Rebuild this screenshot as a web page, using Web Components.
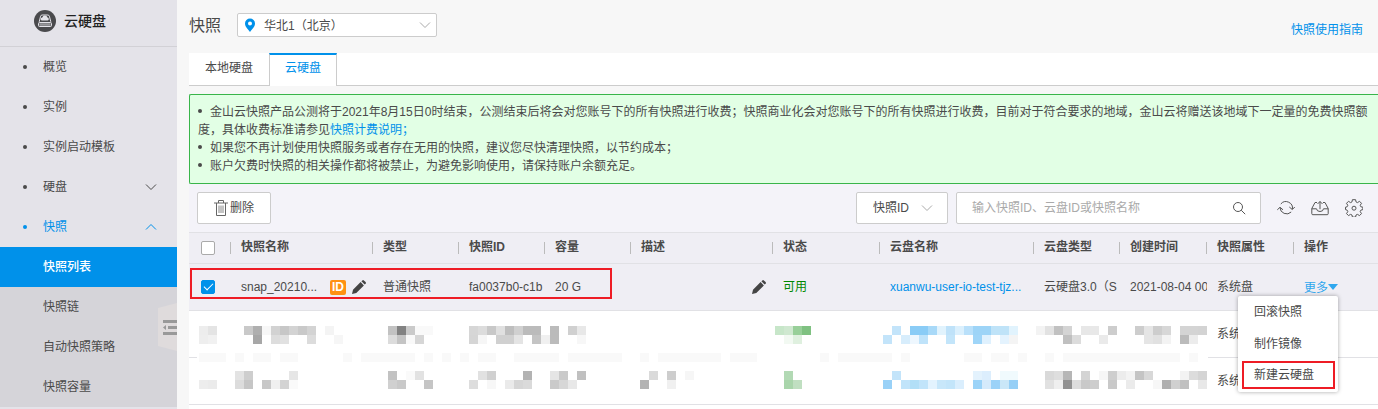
<!DOCTYPE html>
<html lang="zh-CN">
<head>
<meta charset="utf-8">
<title>云硬盘 - 快照</title>
<style>
  html, body {
    margin: 0;
    min-height: 100vh;
  }
  body {
    --blue: #0091ea;
    --mark: #ee1c25;
    --line: #e1e1e5;
    --border: #ccc;
    background: #f7f7f7;
    color: #4a4a4a;
    font: 12px/18px "Liberation Sans", "Noto Sans CJK SC", sans-serif;
  }
</style>
</head>
<body>
<snapshot-page>
  <side-nav slot="nav" heading="云硬盘">
    <nav-item label="概览"></nav-item>
    <nav-item label="实例"></nav-item>
    <nav-item label="实例启动模板"></nav-item>
    <nav-item label="硬盘" arrow="down"></nav-item>
    <nav-item label="快照" arrow="up" open></nav-item>
    <nav-item label="快照列表" sub current></nav-item>
    <nav-item label="快照链" sub></nav-item>
    <nav-item label="自动快照策略" sub></nav-item>
    <nav-item label="快照容量" sub></nav-item>
  </side-nav>
  <page-header heading="快照" region="华北1（北京）">
    <a href="#guide">快照使用指南</a>
  </page-header>
  <tab-bar tabs="本地硬盘,云硬盘" active="1"></tab-bar>
  <notice-box></notice-box>
  <snapshot-toolbar></snapshot-toolbar>
  <snapshot-table></snapshot-table>
</snapshot-page>

<script>
// Create a DOM element with attributes and children
const createElement = (tag, attributes, ...children) => {
  const element = document.createElement(tag);
  for (const key in attributes) {
    element.setAttribute(key, attributes[key]);
  }
  element.append(...children);
  return element;
};

// Base class: every element renders its markup into an open shadow root
class BaseElement extends HTMLElement {
  constructor() {
    super();
    this.attachShadow({ mode: 'open' });
  }

  connectedCallback() {
    this.shadowRoot.innerHTML = `<style>* { box-sizing: border-box; }</style>` + this.template();
    this.rendered();
  }

  template() {
    return '';
  }

  rendered() {}
}

const ICONS = {
  logo: [22, `<circle cx="11" cy="11" r="11" fill="#4a4a4d"/>
    <path d="M5.2 11.8 6.6 6.2Q7 5 8.2 5h5.6Q15 5 15.4 6.2l1.4 5.6" fill="none" stroke="#e4e3e9"/>
    <path d="M8.2 10.6a1.6 1.6 0 0 1 .1-3.2 2.7 2.7 0 0 1 5.2.1 1.6 1.6 0 0 1 .2 3.1z" fill="#e4e3e9"/>
    <rect x="4.5" y="12.5" width="13" height="4" rx="1" fill="#77777a" stroke="#e4e3e9"/>
    <path d="M7 13.5v2M9 13.5v2M11 13.5v2M13 13.5v2M15 13.5v2" stroke="#c8c7cc" stroke-width=".8"/>`],
  pin: [14, `<path fill="#0091ea" fill-rule="evenodd" d="M7 .5a5 5 0 0 0-5 5C2 9 5.200 11.300 7 14c1.800-2.700 5-5 5-8.500a5 5 0 0 0-5-5zm0 3a2 2 0 1 1 0 4 2 2 0 0 1 0-4z"/>`],
  down: [12, `<path d="M1 3.500 6 8.500 11 3.500" fill="none" stroke="currentColor"/>`],
  up: [12, `<path d="M1 8.500 6 3.500 11 8.500" fill="none" stroke="currentColor"/>`],
  trash: [14, `<g fill="none" stroke="#666"><path d="M0 3h14M4.500 3V.5h5V3M2.500 3v12.500h9V3"/><path d="M5 5.500v7.500M7 5.500v7.500M9 5.500v7.500" stroke="#888"/></g>`, 16],
  search: [14, `<g fill="none" stroke="#555"><circle cx="6" cy="6" r="4.500"/><path d="m9.200 9.200 4 4"/></g>`],
  refresh: [18, `<g fill="none" stroke="#555"><path d="M3.800 5A6.600 6.600 0 0 1 15.400 10.300M14.200 13A6.600 6.600 0 0 1 3 8.500"/><path d="M.3 10.800 3 8.300 6 10.800M12.300 8 15.300 10.500 17.800 8"/></g>`],
  upload: [18, `<g fill="none" stroke="#555"><path d="M6 3.500H4L.8 9.500v5.200q0 1 1 1h14.400q1 0 1-1V9.500L14 3.500h-2"/><path d="M.8 9.800h4.700q.3 2.700 3.500 2.700t3.500-2.700h4.700M9 10.200V2.500M6.500 5 9 2.500 11.500 5"/></g>`],
  gear: [18, `<g fill="none" stroke="#555"><path d="M7.400.7h3.200l.4 2.200 1.500.7 2-1.300 2 2-1.300 2 .7 1.500 2 .4v2.400l-2 .5-.7 1.500 1.300 2-2 2-2-1.200-1.500.6-.4 2.100H7.400l-.4-2.100-1.500-.6-2 1.200-2-2 1.300-2-.7-1.500-1.600-.5V8.200l1.600-.4.7-1.500-1.300-2 2-2 2 1.300 1.500-.7z" stroke-linejoin="round"/><circle cx="9" cy="9.200" r="2"/></g>`],
  pencil: [14, `<path fill="#444" d="M0 14l1-4.300 7.600-7.600 3.300 3.300L4.300 13zM9.400 1.300 10.300.4q.8-.7 1.600 0l1.700 1.700q.7.800 0 1.600l-.9.9z"/>`],
  caret: [10, `<path d="M0 1h10L5 7z" fill="currentColor"/>`]
};

class UiIcon extends BaseElement {
  template() {
    const [width, body, height = width] = ICONS[this.getAttribute('name')];
    return `
      <style>
        :host { display: inline-flex; flex: none; }
      </style>
      <svg width="${width}" height="${height}" viewBox="0 0 ${width} ${height}" aria-hidden="true">${body}</svg>`;
  }
}

class SnapshotPage extends BaseElement {
  template() {
    return `
      <style>
        :host { display: flex; min-height: 100vh; gap: 12px; }
        main { flex: 1; min-width: 0; display: flex; flex-direction: column; }
      </style>
      <slot name="nav"></slot>
      <main><slot></slot></main>`;
  }
}

class SideNav extends BaseElement {
  template() {
    return `
      <style>
        :host { display: block; position: relative; flex: none; width: 177px; background: #e4e3e9; }
        header {
          display: flex; align-items: center; gap: 8px; height: 47px;
          padding: 0 0 4px 34px; border-bottom: 1px solid #d2d1d6;
          color: #222; font-size: 14px; font-weight: 500;
        }
        button {
          position: absolute; right: 0; top: 303px; width: 19px; height: 48px;
          padding: 0; border: 0; background: none;
        }
        svg { display: block; }
      </style>
      <header><ui-icon name="logo"></ui-icon><span>${this.getAttribute('heading')}</span></header>
      <nav><slot></slot></nav>
      <button aria-label="收起菜单">
        <svg width="19" height="48" viewBox="0 0 19 48">
          <path d="M0 5 19 0v48L0 43z" fill="#dfdbdc"/>
          <path d="M5 17h14v3H5zM10 23h9v3h-9zM5 29h14v3H5zM5 24.500 8 22v5z" fill="#999"/>
        </svg>
      </button>`;
  }
}

class NavItem extends BaseElement {
  template() {
    const arrow = this.getAttribute('arrow');
    return `
      <style>
        :host { display: block; }
        a {
          display: flex; align-items: center; height: 40px; padding: 0 20px 0 23px;
          color: inherit; text-decoration: none;
        }
        a::before {
          content: ""; width: 4px; height: 4px; margin-right: 16px;
          border-radius: 50%; background: currentColor;
        }
        span { flex: 1; }
        :host([open]) { color: var(--blue); }
        :host([sub]) { background: #d5d4d9; }
        :host([sub]) a::before { visibility: hidden; }
        :host([current]) { background: var(--blue); color: #fff; font-weight: 500; }
      </style>
      <a href="#"><span>${this.getAttribute('label')}</span>${arrow ? `<ui-icon name="${arrow}"></ui-icon>` : ''}</a>`;
  }
}

class PageHeader extends BaseElement {
  template() {
    return `
      <style>
        :host { display: flex; align-items: flex-start; gap: 16px; padding: 13px 15px 14px 0; }
        h1 { margin: 0; font-size: 16px; line-height: 26px; font-weight: 400; }
        .region { display: grid; align-items: center; width: 200px; height: 24px; }
        .region > * { grid-area: 1 / 1; }
        .region ui-icon { pointer-events: none; color: #aaa; }
        .region ui-icon:first-of-type { margin-left: 6px; }
        .region ui-icon:last-of-type { justify-self: end; margin-right: 6px; }
        select {
          appearance: none; width: 100%; height: 24px; padding: 1px 24px 0 26px;
          border: 1px solid var(--border); border-radius: 2px;
          background: #fff; color: inherit; font: inherit;
        }
        .links { margin: 8px 0 0 auto; }
        ::slotted(a) { color: var(--blue); text-decoration: none; }
      </style>
      <h1>${this.getAttribute('heading')}</h1>
      <div class="region">
        <select aria-label="地域"><option>${this.getAttribute('region')}</option></select>
        <ui-icon name="pin"></ui-icon>
        <ui-icon name="down"></ui-icon>
      </div>
      <div class="links"><slot></slot></div>`;
  }
}

class TabBar extends BaseElement {
  template() {
    return `
      <style>
        :host { display: block; background: #fff; }
        div { display: flex; height: 33px; box-shadow: inset 0 -1px var(--border); }
        button {
          padding: 0 16px 3px; border: 0; background: none;
          color: inherit; font: inherit; cursor: pointer;
        }
        button[aria-selected=true] {
          padding: 0 15px 5px; border: solid var(--border); border-width: 0 1px;
          border-top: 2px solid var(--blue); background: #fff; color: var(--blue);
        }
      </style>
      <div role="tablist"></div>`;
  }

  rendered() {
    const list = this.shadowRoot.querySelector('div');
    const active = Number(this.getAttribute('active'));
    this.getAttribute('tabs').split(',').forEach((label, i) => {
      list.append(createElement('button', { role: 'tab', 'aria-selected': i === active }, label));
    });
  }
}

class NoticeBox extends BaseElement {
  template() {
    return `
      <style>
        :host {
          display: block; margin-top: 8px; padding: 8px;
          border: 1px solid #39b54a; border-right: 0; border-radius: 2px 0 0 2px; background: #e2ffe5;
        }
        ul { margin: 0; padding: 0; list-style: none; }
        li::before {
          content: ""; display: inline-block; width: 4px; height: 4px; margin: 0 8px 3px 0;
          border-radius: 50%; background: currentColor;
        }
        a { color: var(--blue); text-decoration: none; }
      </style>
      <ul>
        <li>金山云快照产品公测将于2021年8月15日0时结束，公测结束后将会对您账号下的所有快照进行收费；快照商业化会对您账号下的所有快照进行收费，目前对于符合要求的地域，金山云将赠送该地域下一定量的免费快照额度，具体收费标准请参见<a href="#price">快照计费说明；</a></li>
        <li>如果您不再计划使用快照服务或者存在无用的快照，建议您尽快清理快照，以节约成本；</li>
        <li>账户欠费时快照的相关操作都将被禁止，为避免影响使用，请保持账户余额充足。</li>
      </ul>`;
  }
}

class SnapshotToolbar extends BaseElement {
  template() {
    return `
      <style>
        :host { display: flex; align-items: center; gap: 8px; padding: 8px 15px 8px 8px; background: #f4f3f9; }
        button, select, input { color: inherit; font: inherit; }
        .delete, select, input {
          height: 32px; border: 1px solid var(--border); border-radius: 2px; background: #fff;
        }
        .delete { display: flex; align-items: center; gap: 2px; padding: 0 16px; margin-right: auto; }
        .field { display: grid; align-items: center; }
        .field > * { grid-area: 1 / 1; }
        .field ui-icon { justify-self: end; margin-right: 15px; color: #aaa; pointer-events: none; }
        select { appearance: none; width: 92px; padding: 0 32px 0 16px; }
        input { width: 305px; padding: 0 40px 0 15px; }
        input::placeholder { color: #aaa; }
        .tools { display: flex; gap: 16px; margin-left: 8px; }
        .tools button { display: flex; padding: 0; border: 0; background: none; }
      </style>
      <button class="delete"><ui-icon name="trash"></ui-icon><span>删除</span></button>
      <div class="field">
        <select aria-label="搜索类型"><option>快照ID</option></select>
        <ui-icon name="down"></ui-icon>
      </div>
      <div class="field">
        <input type="text" aria-label="搜索" placeholder="输入快照ID、云盘ID或快照名称">
        <ui-icon name="search"></ui-icon>
      </div>
      <div class="tools">
        <button aria-label="刷新"><ui-icon name="refresh"></ui-icon></button>
        <button aria-label="导出"><ui-icon name="upload"></ui-icon></button>
        <button aria-label="设置"><ui-icon name="gear"></ui-icon></button>
      </div>`;
  }
}

// "更多" button with its open menu, one item can be marked with a frame
class MoreMenu extends BaseElement {
  template() {
    return `
      <style>
        :host { display: inline-block; position: relative; }
        button { font: inherit; color: inherit; border: 0; background: none; text-align: left; cursor: pointer; }
        .more { display: flex; align-items: center; padding: 2px 0 0; line-height: 16px; color: #2fa7ee; white-space: nowrap; }
        .menu {
          position: absolute; z-index: 2; top: 100%; right: 0; width: 100px;
          border-radius: 2px; background: #fff; box-shadow: 0 0 4px rgba(0, 0, 0, .35);
        }
        .menu button { display: block; width: 100%; height: 32px; padding: 0 16px; }
        .menu .marked {
          width: calc(100% - 7px); height: 28px; margin: 1px 3px 3px 4px; padding: 0 10px;
          border: 2px solid var(--mark); white-space: nowrap;
        }
      </style>
      <button class="more" aria-expanded="true">更多<ui-icon name="caret"></ui-icon></button>
      <div class="menu" role="menu">
        <button role="menuitem">回滚快照</button>
        <button role="menuitem">制作镜像</button>
        <button role="menuitem" class="marked">新建云硬盘</button>
      </div>`;
  }
}

// Masked cells on a 9px grid. Each row is [row index, runs];
// a run is "column:shade,shade..." where two digits stand for a grey.
const MASK = [
  [0, `0:ed,e4 5:c9,af,f7,d2,c7,d3,c9,d3 14:f4 21:c2,82,ca,f9,f9
    30:d6,dc,c8,e0,be,d0,bb,bb 39:bb 41:d0,e8 64:c7e6c9,cfe8d0,98cf99,7fc181
    77:c3e4fa 79:8accf6,8accf6,a8d9f8,e1f3fd,bfe2f9,dbf0fd,b9e0fa,9dd4f7,9dd4f7,bfe3f8,bfe3f8,e1f3fd
    93:f3,e2,c1,d4 98:e7,e8 101:cd 104:cd,e5,cd,d7 109:d4,d4,d3`],
  [1, `0:ee,f1 6:a7 8:dd,e1 12:dc 15:f6 21:dc,c4,f9,d6
    30:d5,f6 33:d0,d0,e4 37:c4,f0,bb 42:f7 65:f2f9f2,dff0df
    76:c3e4fa 78:d7edfc,eef7fe,bfe3fa 83:c3e5fa 86:9fd5f8,dff1fe 89:e4f3fe,f4
    96:c0,dc 100:ea 105:e5,e1,f3 109:bb,ec`],
  [3, `0:f9,f9,f9 4:f9 6:f9,f9 9:f9,f9 16:f9 18:f9,f9,f9,f9,f9,f9 25:f9 27:f9 29:f9 31:f9,f9
    35:f9,f9,f9,f9,f9 41:f9,f9,f9,f9,f9,f9 49:f9 51:f9,f9,f9,f9,f9,f9,f9 59:f9,f9,f9 69:f9
    71:f9,f9,f9,f9,f9,f9 78:f9 85:f9,f9 88:f9,f9 91:f9 94:f9
    96:f9,f9,f9,f9,f9,f9,f9,f9,f9,f9,f9,f9,f9 110:f9`],
  [5, `4:e3,ce 10:e6 21:c2 23:fa,e2 31:e1,d0 36:b3 39:e5,ca 42:c0 50:da 52:cd 54:f6 65:b2d9b4
    77:c3e4fa 86:e3f2fd,dceefd 89:f0fafd,f0fafd
    94:d9,de,b6 98:d4 100:f6,ce,ec,f3,c4,d8 109:f3,dc,d4`],
  [6, `0:ed,eb 4:dc,c6 7:c8,f0,d3,fa 21:d0,c9 25:c5 30:dd 32:f7 34:ea,d6,da 39:ca,d7,e8 49:b3 52:f0
    65:a9d5ab,c0dfc1 76:99d1f7 78:c1e4fa,b2dff7,c1e4fa,e3f3fe,c8e7fa,c3e5fa,daeefd
    86:9bd3f8,d5eafb,9bd2f8,cae7f8,96cff6
    94:e1,ef,92,dd,c9,cd 101:c9 103:eb 106:f7,af,d0,c0 111:e8`]
];

class PixelMask extends BaseElement {
  template() {
    const rects = MASK.map(([row, runs]) => runs.trim().split(/\s+/).map((run) => {
      const [start, shades] = run.split(':');
      return shades.split(',').map((shade, i) => {
        const fill = shade.length === 2 ? shade.repeat(3) : shade;
        return `<rect x="${(Number(start) + i) * 9}" y="${row * 9}" width="9" height="9" fill="#${fill}"/>`;
      }).join('');
    }).join('')).join('');
    return `
      <style>
        :host { display: block; padding: 0 1px 0 2px; background: #fff; }
        svg { display: block; }
      </style>
      <svg width="1008" height="63" shape-rendering="crispEdges" aria-hidden="true">${rects}</svg>`;
  }
}

const COLUMNS = [
  ['快照名称', 142], ['类型', 86], ['快照ID', 86], ['容量', 86], ['描述', 142], ['状态', 107],
  ['云盘名称', 154], ['云盘类型', 86], ['创建时间', 87], ['快照属性', 87], ['操作', 84]
];

class SnapshotTable extends BaseElement {
  template() {
    return `
      <style>
        :host { display: block; position: relative; flex: 1; background: #fff; }
        table { width: 100%; table-layout: fixed; border-collapse: separate; border-spacing: 0; }
        th, td { padding: 0 0 0 10px; text-align: left; white-space: nowrap; border-bottom: 1px solid var(--line); }
        th {
          height: 32px; padding-bottom: 2px; border-top: 1px solid var(--line); font-weight: 700;
          background: linear-gradient(#bbb, #bbb) no-repeat right center / 1px 12px #efeef4;
        }
        th:last-child { background: #efeef4; }
        th:first-child, td:first-child { padding-left: 12px; }
        td { height: 47px; }
        .clip { overflow: hidden; }
        .selected td { background: #efeef4; }
        .cell { display: flex; align-items: center; gap: 6px; padding-right: 7px; }
        .cell span { flex: 1; }
        .cell b { padding: 0 2px; border-radius: 2px; background: #ff9113; color: #fff; line-height: 15px; }
        .cell button { display: flex; padding: 0; border: 0; background: none; }
        .ok { color: #080; }
        a { color: var(--blue); text-decoration: none; }
        input {
          appearance: none; display: block; width: 14px; height: 14px; margin: 0;
          border: 1px solid #aaa; border-radius: 2px; background: #fff;
        }
        th input { margin-top: 2px; }
        input:checked {
          border-color: var(--blue);
          background: var(--blue);
          display: grid; place-items: center;
        }
        input:checked::after {
          content: ""; width: 8px; height: 4px; margin-bottom: 3px;
          border: solid #fff; border-width: 0 0 1px 1px; rotate: -45deg;
        }
        pixel-mask { position: absolute; top: 94px; left: 8px; }
        .frame {
          position: absolute; top: 36px; left: 1px; width: 422px; height: 31px;
          border: 2px solid var(--mark); pointer-events: none;
        }
      </style>
      <table>
        <colgroup><col style="width: 42px"></colgroup>
        <thead><tr><th><input type="checkbox" aria-label="全选"></th></tr></thead>
        <tbody>
          <tr class="selected">
            <td><input type="checkbox" aria-label="选择快照" checked></td>
            <td><div class="cell"><span>snap_20210...</span><b>ID</b><button aria-label="编辑名称"><ui-icon name="pencil"></ui-icon></button></div></td>
            <td>普通快照</td>
            <td class="clip">fa0037b0-c1b</td>
            <td>20 G</td>
            <td><div class="cell"><span></span><button aria-label="编辑描述"><ui-icon name="pencil"></ui-icon></button></div></td>
            <td class="ok">可用</td>
            <td><a href="#disk">xuanwu-user-io-test-tjz...</a></td>
            <td class="clip">云硬盘3.0（S</td>
            <td class="clip">2021-08-04 00</td>
            <td>系统盘</td>
            <td><more-menu></more-menu></td>
          </tr>
          <tr><td colspan="10"></td><td>系统盘</td><td></td></tr>
          <tr><td colspan="10"></td><td>系统盘</td><td></td></tr>
        </tbody>
      </table>
      <pixel-mask></pixel-mask>
      <div class="frame"></div>`;
  }

  rendered() {
    const cols = this.shadowRoot.querySelector('colgroup');
    const head = this.shadowRoot.querySelector('thead tr');
    COLUMNS.forEach(([label, width], i) => {
      // The last column takes the remaining width
      const last = i === COLUMNS.length - 1;
      cols.append(createElement('col', last ? {} : { style: `width: ${width}px` }));
      head.append(createElement('th', {}, label));
    });
  }
}

customElements.define('ui-icon', UiIcon);
customElements.define('nav-item', NavItem);
customElements.define('side-nav', SideNav);
customElements.define('page-header', PageHeader);
customElements.define('tab-bar', TabBar);
customElements.define('notice-box', NoticeBox);
customElements.define('snapshot-toolbar', SnapshotToolbar);
customElements.define('more-menu', MoreMenu);
customElements.define('pixel-mask', PixelMask);
customElements.define('snapshot-table', SnapshotTable);
customElements.define('snapshot-page', SnapshotPage);
</script>
</body>
</html>
